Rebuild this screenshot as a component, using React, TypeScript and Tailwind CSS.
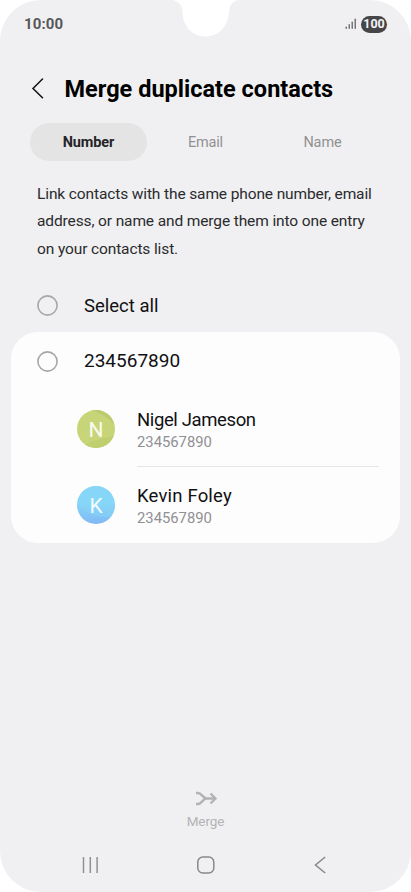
const contacts = [
  {
    name: "Nigel Jameson",
    initial: "N",
    number: "234567890",
    tracking: "tracking-[-0.380px]",
    border: "border-[#e6e6e8]",
  },
  {
    name: "Kevin Foley",
    initial: "K",
    number: "234567890",
    tracking: "tracking-[0.180px]",
    border: "border-transparent",
  },
];

const StatusBar = () => {
  return (
    <div className="relative flex h-[48px] items-center justify-between pl-[24px] pr-[24px] text-[#58585a]">
      <span className="text-[15px] font-bold leading-[18px] tracking-[0.100px]">
        10:00
      </span>
      <svg
        className="absolute left-[172px] top-0"
        width="68"
        height="38"
        viewBox="0 0 68 38"
        fill="white"
      >
        <path d="M0 0C7 1 10 5 10.500 12C11 27 21 36.500 33.500 36.500C46 36.500 56 27 57 12C57.500 5 60 1 67 0Z" />
      </svg>
      <div className="flex items-center gap-[4px]">
        <svg width="12" height="12" viewBox="0 0 12 12" fill="#77777a">
          <rect x="0.500" y="8.500" width="1.500" height="2.500" rx="0.700" />
          <rect x="3.500" y="6" width="1.500" height="5" rx="0.700" />
          <rect x="6.500" y="3.500" width="1.500" height="7.500" rx="0.700" />
          <rect x="9.500" y="0.500" width="1.500" height="10.500" rx="0.700" />
        </svg>
        <span className="flex h-[17px] w-[26px] items-center justify-center rounded-full bg-[#464648] text-[12.500px] font-bold leading-none text-[#f4f4f5]">
          100
        </span>
      </div>
    </div>
  );
};

const Avatar = ({ initial }: { initial: string }) => {
  return (
    <div className="relative flex size-[38px] shrink-0 items-center justify-center overflow-hidden rounded-full">
      {initial === "N" ? (
        <svg className="absolute inset-0" width="39" height="39" viewBox="0 0 39 39">
          <rect width="39" height="39" fill="#c7d578" />
          <path d="M14 0C23 3 32 8 39 16V0Z" fill="#bccb70" />
          <path d="M0 39L10 34C18 29 28 29 39 25V39Z" fill="#bfcf70" />
        </svg>
      ) : (
        <svg className="absolute inset-0" width="39" height="39" viewBox="0 0 39 39">
          <defs>
            <linearGradient id="sky" x1="0" y1="0" x2="0" y2="1">
              <stop offset="0.450" stopColor="#86d5f7" />
              <stop offset="1" stopColor="#80b6f5" />
            </linearGradient>
          </defs>
          <rect width="39" height="39" fill="url(#sky)" />
          <path d="M0 16C9 29 19 32 39 31V0H0Z" fill="#86d6f8" opacity="0.400" />
        </svg>
      )}
      <span className="relative top-[1.500px] text-[21px] leading-none text-white/90">
        {initial}
      </span>
    </div>
  );
};

const Radio = () => (
  <svg
    className="shrink-0"
    width="21"
    height="21"
    viewBox="0 0 21 21"
    fill="none"
    stroke="#a6a6a8"
    strokeWidth="1.600"
  >
    <circle cx="10.500" cy="10.500" r="9.600" />
  </svg>
);

const App = () => {
  return (
    <div className="h-[892px] w-[411px] overflow-hidden bg-white font-['Roboto',sans-serif]">
      <div className="flex h-full flex-col overflow-hidden rounded-[41px] bg-[#f0f0f2]">
        <StatusBar />
        <header className="mt-[24px] flex h-[34px] items-center pl-[31px]">
          <svg
            width="14"
            height="22"
            viewBox="0 0 14 22"
            fill="none"
            stroke="#111"
            strokeWidth="1.500"
            strokeLinecap="round"
          >
            <path d="M11.500 1L2 10.500L11.500 19.800" />
          </svg>
          <h1 className="ml-[19.500px] mt-[2px] whitespace-nowrap text-[23.500px] font-bold tracking-[0.010px] text-black">
            Merge duplicate contacts
          </h1>
        </header>
        <nav className="mx-[30px] mt-[17px] grid h-[38px] grid-cols-3 text-center text-[14.500px] leading-[38px] text-[#909093]">
          <span className="h-[38px] rounded-full bg-[#e4e4e5] pt-px font-bold leading-[37px] tracking-[-0.100px] text-[#252527]">
            Number
          </span>
          <span className="pt-px tracking-[-0.200px]">Email</span>
          <span className="pt-px tracking-[-0.100px]">Name</span>
        </nav>
        <p className="ml-[37px] mt-[19.500px] whitespace-nowrap text-[15.500px] leading-[27.500px] tracking-[-0.120px] text-[#2b2b2d]">
          Link contacts with the same phone number, email
          <br />
          address, or name and merge them into one entry
          <br />
          on your contacts list.
        </p>
        <div className="mt-[30.500px] flex h-[24px] items-center gap-[26px] pl-[37px] text-[18.500px] text-[#111113]">
          <Radio />
          <span className="mt-[3px]">Select all</span>
        </div>
        <section className="mx-[11px] mt-[14px] h-[211px] rounded-[27px] bg-[#fdfdfe]">
          <div className="flex h-[59px] items-center gap-[26px] pl-[26px] text-[19px] text-[#111113]">
            <Radio />
            <span>234567890</span>
          </div>
          {contacts.map((contact) => (
            <div key={contact.name} className="flex h-[76px] items-center pl-[66px]">
              <Avatar initial={contact.initial} />
              <div
                className={`ml-[22px] mr-[21px] flex h-full flex-1 flex-col justify-center border-b pt-[5px] ${contact.border}`}
              >
                <span
                  className={`text-[18.500px] leading-[23px] text-[#111113] ${contact.tracking}`}
                >
                  {contact.name}
                </span>
                <span className="text-[14.800px] leading-[20px] text-[#909093]">
                  {contact.number}
                </span>
              </div>
            </div>
          ))}
        </section>
        <footer className="mt-auto">
          <div className="flex flex-col items-center text-[#b3b3b5]">
            <svg
              className="ml-px"
              width="23"
              height="16"
              viewBox="0 0 23 16"
              fill="none"
              stroke="currentColor"
              strokeWidth="2.400"
            >
              <path d="M1 2H3C7 2 7.500 7.500 12 7.500H21M1 13H3C7 13 7.500 7.500 12 7.500M15.500 2.500L20.500 7.500L15.500 12.500" />
            </svg>
            <span className="mt-[5px] text-[13.500px] leading-[18px] tracking-[-0.100px]">
              Merge
            </span>
          </div>
          <div className="mt-[26px] flex h-[36px] justify-between pl-[82px] pr-[85px]">
            <svg width="17" height="18" viewBox="0 0 17 18" stroke="#919193" strokeWidth="1.500">
              <path d="M1.500 1V17M8.300 1V17M15.100 1V17" />
            </svg>
            <svg width="18" height="18" viewBox="0 0 18 18" fill="none" stroke="#88888a" strokeWidth="1.500">
              <rect x="0.800" y="1" width="16" height="16" rx="5" />
            </svg>
            <svg width="14" height="18" viewBox="0 0 14 18" fill="none" stroke="#88888a" strokeWidth="1.500">
              <path d="M13.200 1L3.500 9L13.200 17" />
            </svg>
          </div>
        </footer>
      </div>
    </div>
  );
};

export default App;
